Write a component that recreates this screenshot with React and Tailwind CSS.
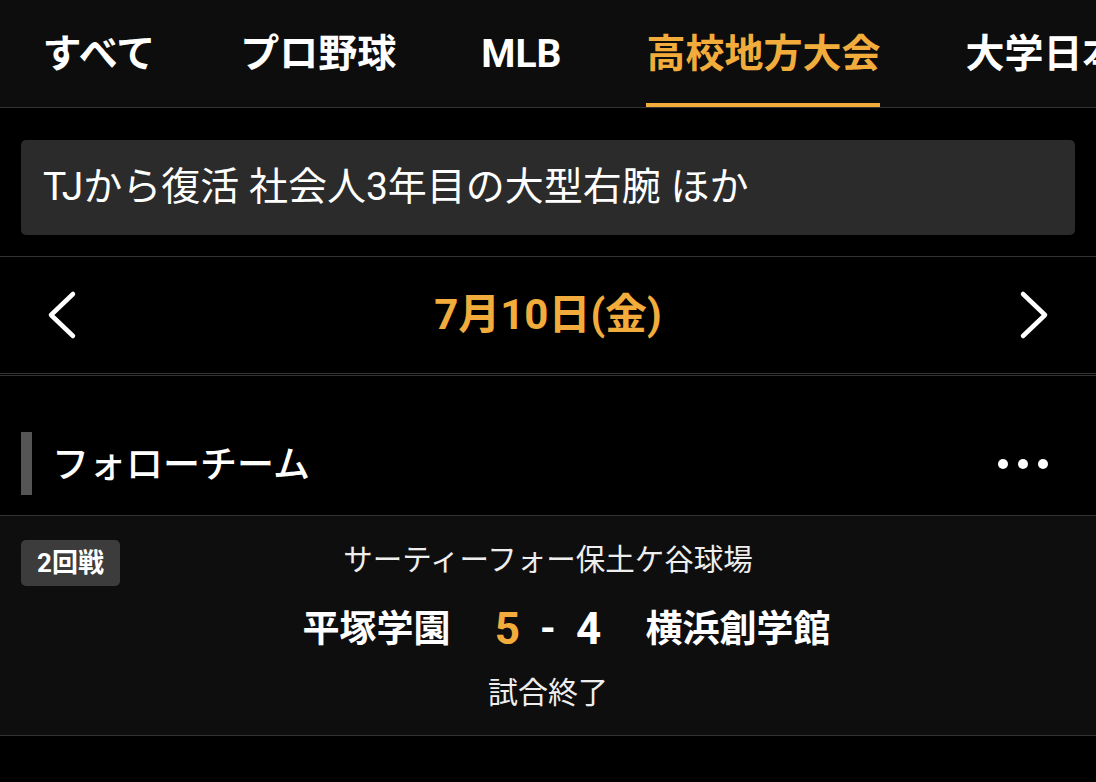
import React from 'react';

const tabs = ['すべて', 'プロ野球', 'MLB', '高校地方大会', '大学日本代表'];

const Chevron = ({ dir }) => (
  <svg width="30" height="50" viewBox="0 0 30 50" fill="none">
    <polyline
      points={dir === 'left' ? '26,4 4,25 26,46' : '4,4 26,25 4,46'}
      stroke="#fff"
      strokeWidth="4.5"
      strokeLinecap="round"
      strokeLinejoin="round"
    />
  </svg>
);

const App = () => {
  const active = 3;

  return (
    <div
      className="min-h-screen w-full bg-black text-white overflow-hidden"
      style={{ fontFamily: 'Roboto, "Noto Sans CJK JP", sans-serif' }}
    >
      {/* category tabs */}
      <header className="h-[108px] bg-[#0d0d0d] border-b border-[#333] flex whitespace-nowrap overflow-hidden">
        {tabs.map((t, i) => (
          <div key={t} className="relative h-full flex items-center px-[42.5px] shrink-0">
            <span
              className={`text-[39px] font-bold leading-none pt-[2px] ${
                i === active ? 'text-[#f2ac3c]' : 'text-white'
              }`}
            >
              {t}
            </span>
            {i === active && (
              <div className="absolute left-[42.5px] right-[42.5px] bottom-0 h-[4px] bg-[#f2ac3c]" />
            )}
          </div>
        ))}
      </header>

      {/* headline */}
      <div className="pt-[32px] pb-[21px]">
        <div className="mx-[21px] h-[95px] bg-[#2b2b2b] rounded-[5px] flex items-center px-[22px]">
          <span className="text-[39px] leading-none text-white">
            TJから復活 社会人3年目の大型右腕 ほか
          </span>
        </div>
      </div>

      {/* date switcher */}
      <div className="border-t border-[#333] h-[117px] flex items-center justify-between px-[47px]">
        <Chevron dir="left" />
        <span className="text-[42px] font-bold text-[#f2ac3c] leading-none">7月10日(金)</span>
        <Chevron dir="right" />
      </div>
      <div className="border-t border-[#333] h-[2px]" />
      <div className="border-t border-[#333]" />

      {/* followed teams */}
      <div className="pt-[56px] pb-[20px] flex items-center justify-between">
        <div className="flex items-center">
          <div className="ml-[21px] w-[11px] h-[63px] bg-[#555]" />
          <span className="ml-[20px] pt-[4px] text-[37px] font-medium leading-none">フォローチーム</span>
        </div>
        <div className="flex items-center gap-[10px] pr-[48px]">
          <div className="w-[10px] h-[10px] rounded-full bg-white" />
          <div className="w-[10px] h-[10px] rounded-full bg-white" />
          <div className="w-[10px] h-[10px] rounded-full bg-white" />
        </div>
      </div>

      <div className="relative border-t border-b border-[#333] bg-[#0e0e0e] pt-[24px] pb-[23px]">
        <div className="absolute left-[21px] top-[24px] w-[99px] h-[46px] rounded-[5px] bg-[#3c3c3c] flex items-center justify-center">
          <span className="text-[26px] font-bold leading-none">2回戦</span>
        </div>
        <div className="h-[40px] flex items-center justify-center text-[29.5px] text-[#eee]">
          サーティーフォー保土ケ谷球場
        </div>
        <div className="mt-[24px] h-[50px] flex items-center">
          <div className="flex-1 text-right text-[37px] font-bold leading-none">平塚学園</div>
          <div className="w-[195px] flex items-center justify-center gap-[20px] font-bold leading-none">
            <span className="text-[44px] text-[#f2ac3c]">5</span>
            <span className="text-[40px]">-</span>
            <span className="text-[44px]">4</span>
          </div>
          <div className="flex-1 text-left text-[37px] font-bold leading-none">横浜創学館</div>
        </div>
        <div className="mt-[18px] h-[40px] flex items-center justify-center text-[30px] text-[#eee]">
          試合終了
        </div>
      </div>
    </div>
  );
};

export default App;
